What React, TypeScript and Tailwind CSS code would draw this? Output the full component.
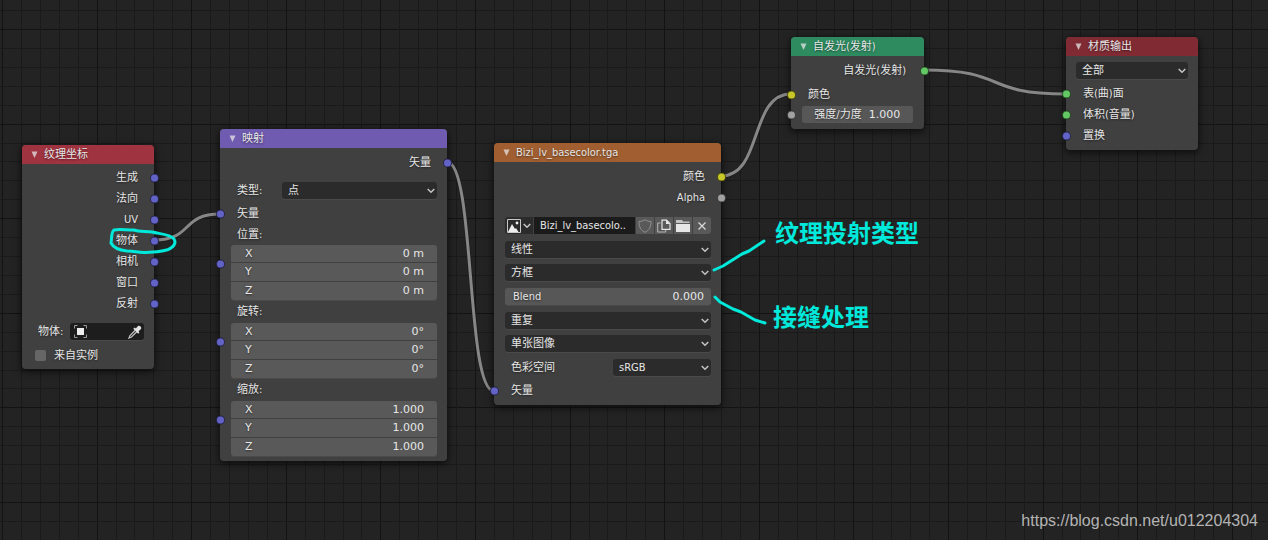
import type { ReactNode } from "react";

const GRID_MAJOR = 94.6;
const GRID_MINOR = GRID_MAJOR / 5;

type Point = [number, number];

const links: { from: Point; to: Point }[] = [
  { from: [154, 240], to: [220, 214] },
  { from: [447, 162], to: [494, 391] },
  { from: [721, 176], to: [791, 94] },
  { from: [924, 70], to: [1066, 94] },
];

const socketColors = {
  vector: "bg-[#6363c7]",
  color: "bg-[#c7c729]",
  value: "bg-[#a1a1a1]",
  shader: "bg-[#63c763]",
};

type SocketType = keyof typeof socketColors;

function Grid() {
  const lines = Array.from({ length: 140 }, (_, i) => i - 5);
  return (
    <svg className="absolute inset-0 h-full w-full" shapeRendering="crispEdges" aria-hidden="true">
      {lines.map((i) => {
        const x = Math.round(2 + i * GRID_MINOR);
        const y = Math.round(29 + i * GRID_MINOR);
        const major = i % 5 === 0;
        return (
          <g key={i} fill={major ? "#131313" : "#1a1a1a"}>
            <rect x={x} y="0" width="1" height="100%" />
            <rect x="0" y={y} width="100%" height="1" />
          </g>
        );
      })}
    </svg>
  );
}

function Links() {
  return (
    <svg className="absolute inset-0 h-full w-full" fill="none" aria-hidden="true">
      {links.map(({ from: [x1, y1], to: [x2, y2] }) => {
        const h = (x2 - x1) * 0.6;
        const d = `M${x1} ${y1} C${x1 + h} ${y1} ${x2 - h} ${y2} ${x2} ${y2}`;
        return (
          <g key={d}>
            <path d={d} stroke="#1a1a1a" strokeOpacity="0.6" strokeWidth="4.500" />
            <path d={d} stroke="#868686" strokeWidth="3" />
          </g>
        );
      })}
    </svg>
  );
}

function Annotations() {
  return (
    <div className="pointer-events-none absolute inset-0 font-['Noto_Sans_CJK_SC',sans-serif] text-2xl leading-8 font-bold text-[#00e9db]">
      <svg
        className="absolute inset-0 h-full w-full"
        fill="none"
        stroke="#00e9db"
        strokeWidth="3"
        strokeLinecap="round"
        strokeLinejoin="round"
        aria-hidden="true"
      >
        <path d="M134 230 C126 230 118 229 114 230 C111 232 112 238 111 243 C113 247 118 250 127 251 C136 251 137 253 146 252.500 C155 252 166 252 171 248 C175 245 176 242 174 239 C170 234 160 234 152 232 C146 231 139 232 134 230 Z" />
        <path d="M714 270 L723 266 L742 254 L749 251 L764 241" />
        <path d="M715 297 L720 302 L733 309 L741 312 L755 320 L765 323" />
      </svg>
      <p className="absolute top-[216px] left-[775px]">纹理投射类型</p>
      <p className="absolute top-[300px] left-[773px]">接缝处理</p>
    </div>
  );
}

function Node({ title, header, className, children }: { title: string; header: string; className: string; children: ReactNode }) {
  return (
    <section
      className={`absolute rounded-[4px] bg-[#424242]/95 shadow-[0_2px_7px_1px_rgba(0,0,0,0.6)] ${className}`}
    >
      <h2 className={`flex h-[19px] items-center gap-[6px] rounded-t-[4px] pl-[9px] ${header}`}>
        <svg width="7" height="7" viewBox="0 0 7 7" fill="#e6e6e6" fillOpacity="0.75" aria-hidden="true">
          <path d="M0.500 0.500h6L3.500 7z" />
        </svg>
        {title}
      </h2>
      {children}
    </section>
  );
}

function Socket({ type, side }: { type: SocketType; side: "left" | "right" }) {
  return (
    <span
      className={`absolute top-1/2 size-[9px] -translate-y-1/2 rounded-full border border-black/60 ${
        side === "left" ? "-left-1" : "-right-[5px]"
      } ${socketColors[type]}`}
    />
  );
}

function Output({ label, type, className = "pr-4" }: { label: string; type: SocketType; className?: string }) {
  return (
    <div className={`relative flex h-[21px] items-center justify-end ${className}`}>
      {label}
      <Socket type={type} side="right" />
    </div>
  );
}

function Input({ label, type }: { label: string; type: SocketType }) {
  return (
    <div className="relative flex h-[21px] items-center pt-px pl-[17px]">
      {label}
      <Socket type={type} side="left" />
    </div>
  );
}

function Chevron({ className = "" }: { className?: string }) {
  return (
    <svg
      className={className}
      width="8"
      height="6"
      viewBox="0 0 8 6"
      fill="none"
      stroke="#c4c4c4"
      strokeWidth="1.500"
      aria-hidden="true"
    >
      <path d="M0.700 1 L4 4.300 L7.300 1" />
    </svg>
  );
}

function Dropdown({ id, label, value, className = "" }: { id: string; label?: string; value: string; className?: string }) {
  return (
    <div className={`relative h-[17px] rounded-[3px] bg-[#2b2b2b] shadow-[0_1px_0_#4a4a4a] ${className}`}>
      <select
        id={id}
        aria-label={label}
        className="block h-full w-full appearance-none rounded-[3px] pl-[6px] leading-[17px] outline-none"
      >
        <option>{value}</option>
      </select>
      <Chevron className="pointer-events-none absolute top-[6px] right-[2px]" />
    </div>
  );
}

function VectorGroup({ title, values, className }: { title: string; values: string[]; className: string }) {
  return (
    <fieldset>
      <legend className={`flex items-center pt-px pl-[17px] ${className}`}>{title}</legend>
      <div className="relative pr-[10px] pl-[11px] font-['DejaVu_Sans',sans-serif]">
        <div className="flex flex-col gap-px overflow-hidden rounded-[3px] shadow-[0_1px_0_#4a4a4a]">
          {["X", "Y", "Z"].map((axis, i) => (
            <label
              key={axis}
              className="flex h-[18px] items-center justify-between bg-[#595959] pr-[13px] pl-[14px] first:h-[17px]"
            >
              {axis}
              <input className="w-20 text-right outline-none" defaultValue={values[i]} />
            </label>
          ))}
        </div>
        <span className="absolute top-[14px] left-0 h-[9px]">
          <Socket type="vector" side="left" />
        </span>
      </div>
    </fieldset>
  );
}

function TextureCoordinateNode() {
  return (
    <Node title="纹理坐标" header="bg-[#a03340]" className="top-[145px] left-[22px] w-[132px] pb-1">
      <div className="pt-[3px]">
        {["生成", "法向", "UV", "物体", "相机", "窗口", "反射"].map((label) => (
          <Output key={label} label={label} type="vector" />
        ))}
      </div>
      <div className="mt-[9px] flex h-[17px] items-center justify-between pr-[10px] pl-4">
        <span>物体:</span>
        <button
          aria-label="物体"
          className="flex h-[17px] w-[74px] items-center justify-between rounded-[3px] bg-[#1d1d1d] pr-[2px] pl-[4px] shadow-[0_1px_0_#4a4a4a]"
        >
          <svg width="13" height="13" viewBox="0 0 13 13" fill="none" aria-hidden="true">
            <path d="M0.500 3.500V0.500h3M9.500 0.500h3v3M12.500 9.500v3h-3M3.500 12.500h-3v-3" stroke="#9a9a9a" />
            <path d="M3 3h7v7H3z" fill="#eeeeee" />
          </svg>
          <svg width="14" height="14" viewBox="0 0 14 14" fill="none" aria-hidden="true">
            <path d="M7.500 5 L2 10.500 L1 13 L3.500 12 L9 6.500" stroke="#bdbdbd" strokeWidth="1.300" />
            <path d="M5.300 3.800 L6.800 2.600 L7.800 3.500 L9.800 1.200 C11.500 -0.400 14.400 2.300 12.800 4.200 L10.500 6.200 L11.400 7.200 L10.200 8.700 Z" fill="#e4e4e4" />
          </svg>
        </button>
      </div>
      <label className="mt-[6px] flex h-[19px] items-center gap-2 pl-[13px]">
        <input type="checkbox" className="size-[11px] appearance-none rounded-[2px] bg-[#666666]" />
        来自实例
      </label>
    </Node>
  );
}

function MappingNode() {
  return (
    <Node title="映射" header="bg-[#6f5baf]" className="top-[129px] left-[220px] w-[227px] pb-[5px]">
      <div className="pt-1">
        <Output label="矢量" type="vector" />
      </div>
      <div className="mt-[9px] mb-1 flex h-[17px] items-center justify-between pr-[10px] pl-[17px]">
        <label htmlFor="mapping-type">类型:</label>
        <Dropdown id="mapping-type" value="点" className="w-[155px]" />
      </div>
      <Input label="矢量" type="vector" />
      <VectorGroup title="位置:" values={["0 m", "0 m", "0 m"]} className="h-[21px]" />
      <VectorGroup title="旋转:" values={["0°", "0°", "0°"]} className="h-[23px]" />
      <VectorGroup title="缩放:" values={["1.000", "1.000", "1.000"]} className="h-[23px]" />
    </Node>
  );
}

function ImagePicker() {
  return (
    <div className="flex h-[17px] gap-px overflow-hidden rounded-[3px]">
      <button aria-label="浏览图像" className="flex w-7 items-center justify-center gap-[2px] bg-[#2b2b2b]">
        <svg width="14" height="14" viewBox="0 0 14 14" fill="none" aria-hidden="true">
          <path d="M0.500 0.500h13v13h-13z" stroke="#c8c8c8" />
          <path d="M1 13 L5 5 L8 10 L9 9 L11.500 13z" fill="#eeeeee" />
          <circle cx="10" cy="4" r="1.400" fill="#eeeeee" />
        </svg>
        <Chevron />
      </button>
      <input
        aria-label="图像名称"
        defaultValue="Bizi_lv_basecolo.."
        className="min-w-0 flex-1 bg-[#1b1b1b] pl-[6px] outline-none"
      />
      <button aria-label="伪用户" className="flex w-[18px] items-center justify-center bg-[#595959]">
        <svg width="14" height="14" viewBox="0 0 14 14" fill="none" stroke="#929292" aria-hidden="true">
          <path d="M7 0.700 C5.500 2 3 2.500 1 2.500 C1 8 2.500 11 7 13.300 C11.500 11 13 8 13 2.500 C11 2.500 8.500 2 7 0.700z" />
        </svg>
      </button>
      <button aria-label="新建图像" className="flex w-[18px] items-center justify-center bg-[#595959]">
        <svg width="14" height="14" viewBox="0 0 14 14" fill="none" aria-hidden="true">
          <path d="M3.500 4H0.700v9h8v-2" stroke="#b5b5b5" />
          <path d="M5 1.200h4.500L13 4.500v5.800H5z" stroke="#e6e6e6" strokeWidth="1.200" />
          <path d="M9 1v4h4z" fill="#e6e6e6" />
        </svg>
      </button>
      <button aria-label="打开图像" className="flex w-[18px] items-center justify-center bg-[#595959]">
        <svg width="14" height="12" viewBox="0 0 14 12" fill="#e6e6e6" aria-hidden="true">
          <path d="M0 0h6l1 1.500h6.500V3H0z" fillOpacity="0.75" />
          <path d="M0 4h14v8H0z" />
        </svg>
      </button>
      <button aria-label="断开" className="flex w-[18px] items-center justify-center bg-[#595959]">
        <svg width="8" height="8" viewBox="0 0 8 8" stroke="#d8d8d8" strokeWidth="1.300" aria-hidden="true">
          <path d="M0.500 0.500l7 7M7.500 0.500l-7 7" />
        </svg>
      </button>
    </div>
  );
}

function ImageTextureNode() {
  return (
    <Node title="Bizi_lv_basecolor.tga" header="bg-[#a15f31]" className="top-[143px] left-[494px] w-[227px] pb-1">
      <div className="pt-1">
        <Output label="颜色" type="color" />
        <Output label="Alpha" type="value" />
      </div>
      <div className="mt-[9px] flex flex-col gap-[7px] pr-[10px] pl-[11px]">
        <ImagePicker />
        <div className="flex flex-col gap-[6px]">
          <Dropdown id="interpolation" label="插值" value="线性" />
          <Dropdown id="projection" label="投射" value="方框" />
        </div>
        <label className="flex h-[17px] items-center justify-between rounded-[3px] bg-[#575757] pr-[7px] pl-2 shadow-[0_1px_0_#4a4a4a]">
          Blend
          <input
            className="w-20 text-right font-['DejaVu_Sans',sans-serif] outline-none"
            defaultValue="0.000"
          />
        </label>
        <div className="flex flex-col gap-[6px]">
          <Dropdown id="extension" label="扩展" value="重复" />
          <Dropdown id="source" label="来源" value="单张图像" />
        </div>
        <div className="flex h-[17px] items-center justify-between pl-[6px]">
          <label htmlFor="color-space">色彩空间</label>
          <Dropdown id="color-space" value="sRGB" className="w-[98px]" />
        </div>
      </div>
      <div className="mt-1">
        <Input label="矢量" type="vector" />
      </div>
    </Node>
  );
}

function EmissionNode() {
  return (
    <Node title="自发光(发射)" header="bg-[#2e8b60]" className="top-[37px] left-[791px] w-[133px] pb-[6px]">
      <div className="pt-1">
        <Output label="自发光(发射)" type="shader" className="pr-[18px]" />
      </div>
      <div className="mt-[3px]">
        <Input label="颜色" type="color" />
      </div>
      <div className="relative mt-px px-[11px]">
        <label className="flex h-[17px] items-center justify-center gap-[7px] rounded-[3px] bg-[#575757]">
          强度/力度
          <input className="w-8 font-['DejaVu_Sans',sans-serif] outline-none" defaultValue="1.000" />
        </label>
        <Socket type="value" side="left" />
      </div>
    </Node>
  );
}

function MaterialOutputNode() {
  return (
    <Node title="材质输出" header="bg-[#802b34]" className="top-[37px] left-[1066px] w-[132px] pb-1">
      <div className="px-[10px] pt-[6px] pb-1">
        <Dropdown id="target" label="目标" value="全部" />
      </div>
      <Input label="表(曲)面" type="shader" />
      <Input label="体积(音量)" type="shader" />
      <Input label="置换" type="vector" />
    </Node>
  );
}

export default function App() {
  return (
    <main className="relative min-h-screen w-full overflow-hidden bg-[#232323] font-['DejaVu_Sans_Condensed','DejaVu_Sans','Noto_Sans_CJK_SC',sans-serif] text-[11px] leading-4 text-[#e6e6e6]">
      <Grid />
      <Links />

      {/* Nodes */}
      <div className="[text-shadow:0_1px_2px_rgba(0,0,0,0.5)]">
        <TextureCoordinateNode />
        <MappingNode />
        <ImageTextureNode />
        <EmissionNode />
        <MaterialOutputNode />
      </div>

      <Annotations />

      <a
        href="https://blog.csdn.net/u012204304"
        className="absolute right-[10px] bottom-[7px] font-['Liberation_Sans',sans-serif] text-base leading-6 text-[#b4b4b4]"
      >
        https://blog.csdn.net/u012204304
      </a>
    </main>
  );
}
